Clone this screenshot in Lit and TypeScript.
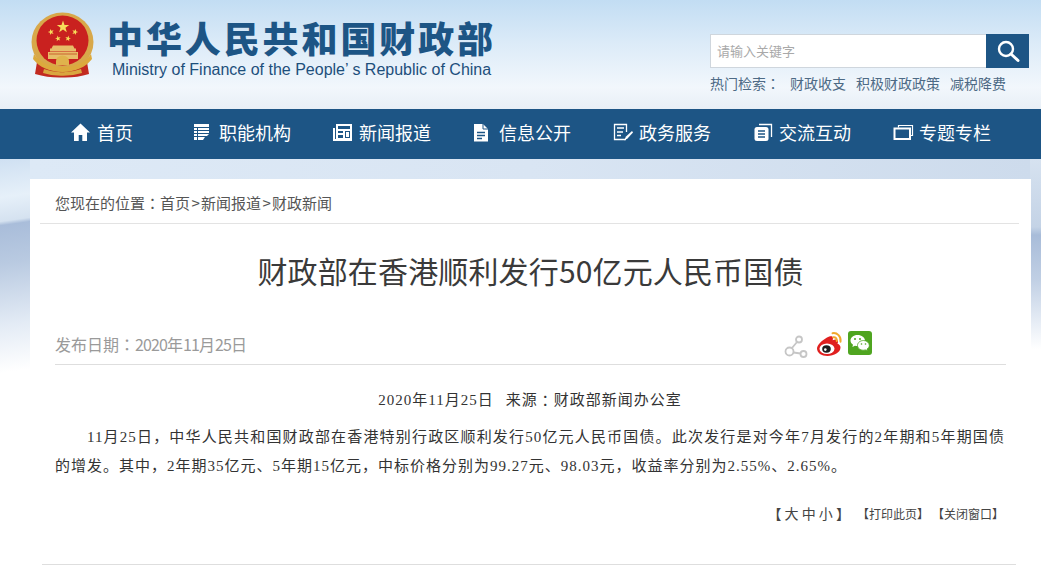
import { LitElement, html, css, svg } from "lit";
import { customElement } from "lit/decorators.js";

const NAVY = "#1d5585";

function star(cx: number, cy: number, r: number, rot = 0) {
  const pts: string[] = [];
  for (let i = 0; i < 10; i++) {
    const rad = i % 2 === 0 ? r : r * 0.4;
    const a = -Math.PI / 2 + (i * Math.PI) / 5 + rot;
    pts.push(`${(cx + rad * Math.cos(a)).toFixed(2)},${(cy + rad * Math.sin(a)).toFixed(2)}`);
  }
  return pts.join(" ");
}

const navIcons = [
  svg`<svg width="20" height="20" viewBox="0 0 20 20"><path d="M10 1.500 .5 10.500h3V19h4.700v-6h3.600v6h4.700v-8.500h3z" fill="#fff" transform="translate(-.5 0)"/></svg>`,
  svg`<svg width="17" height="18" viewBox="0 0 17 18"><path d="M1 1h15v3H1zM1 5h3v2H1zM5 5h11v2H5zM1 8h3v2H1zM5 8h11v2H5zM1 11h3v2H1zM5 11h11l-2 2H5zM1 14h3v3H1zM5 14h7l-2 3H5z" fill="#fff"/></svg>`,
  svg`<svg width="19" height="20" viewBox="0 0 19 20"><path d="M3 2h16v17H0V6h2v11h1z" fill="#fff"/><path d="M5 4h12v3H5zM5 9h5v2H5zM5 13h5v3H5zM12 9h5v7h-5z" fill="${NAVY}"/><path d="M13 10h3v5h-3z" fill="#fff"/></svg>`,
  svg`<svg width="16" height="19" viewBox="0 0 16 19"><path d="M1 1h9l5 5v12.500H1z" fill="#fff"/><path d="M10 1v5h5" fill="none" stroke="${NAVY}"/><path d="M4 9.500h8M4 12.500h8M4 15.500h5" stroke="${NAVY}" stroke-width="1.400"/></svg>`,
  svg`<svg width="21" height="20" viewBox="0 0 21 20"><path d="M13 17.500H1.500V2.500h12V10M4 6h7M4 10h6M4 13.500h4" fill="none" stroke="#fff" stroke-width="1.300"/><path d="M11 18.500l2-4 6-5.500 1 1.500-5.500 6z" fill="#fff"/></svg>`,
  svg`<svg width="20" height="20" viewBox="0 0 20 20"><path d="M6 2.500h12.500V15" fill="none" stroke="#fff" stroke-width="1.300"/><rect x="1.500" y="5" width="14" height="14" rx="2.500" fill="#fff"/><path d="M5 9h7M5 12h7M5 15h7" stroke="${NAVY}" stroke-width="1.500"/></svg>`,
  svg`<svg width="21" height="17" viewBox="0 0 21 17"><path d="M5.500 3.500V1.500h14v10H17" fill="none" stroke="#fff" stroke-width="1.200"/><rect x="1.500" y="4.500" width="15.500" height="10.500" fill="none" stroke="#fff" stroke-width="2"/></svg>`,
];
const navLabels = ["首页", "职能机构", "新闻报道", "信息公开", "政务服务", "交流互动", "专题专栏"];
const navWidths = [122, 140, 140, 140, 140, 140, 140];

const emblem = svg`<svg class="emblem" width="66" height="68" viewBox="0 0 66 68">
  <path d="M8 44 5 62q14 4 27 3.500Q46 66 59 62l-3-18z" fill="#c22a20"/>
  <ellipse cx="32.500" cy="30" rx="31" ry="29.500" fill="#d8a84a"/>
  <ellipse cx="32.500" cy="28.500" rx="26" ry="25" fill="#c9211f"/>
  <polygon points="${star(33, 15, 6.500)}" fill="#f7dc5a"/>
  <polygon points="${star(21, 20, 3.200, -0.3)}" fill="#f7dc5a"/>
  <polygon points="${star(45, 20, 3.200, 0.3)}" fill="#f7dc5a"/>
  <polygon points="${star(28, 26.500, 3, -0.2)}" fill="#f7dc5a"/>
  <polygon points="${star(38, 26.500, 3, 0.2)}" fill="#f7dc5a"/>
  <path d="M23 33.500h20l1.500 3h-23zM20 36.500h26v3H20zM18 40h30v7H18z" fill="#e7bd68"/>
  <path d="M19 41.500h28v1H19z" fill="#c9622f"/>
  <path d="M4 42c6 9 16 13 28.500 13S55 51 61 42l1 5c-6 8-17 13-29.500 13S9 55 3 47z" fill="#dcaa3d"/>
  <path d="M31 46h3v3h-3z" fill="#c9211f"/>
  <path d="M26 49a6.500 5.500 0 0 1 13 0v4H26z" fill="#e0b34c"/>
  <path d="M14 57q9 3.500 18 3.200 10 .3 19-3.200l1 4q-10 3-20 2.800Q22 64 13 61z" fill="#d9a63f"/>
</svg>`;

const weibo = svg`<svg width="27" height="27" viewBox="0 0 27 27">
  <path d="M11 6.500c3.500-2 6-1.800 6 .5 0 1-.3 1.700-.3 2.200 2.500-1 5-1 5.300 1.300.1 1-.4 1.800-.5 2.300 1.800.5 3 2 3 3.800C24.500 21.500 18 25 11.500 25 5.500 25 1 22 1 17.500 1 14 6 9.300 11 6.500z" fill="#e0201f"/>
  <ellipse cx="11" cy="17.700" rx="7.500" ry="5.300" fill="#fff"/>
  <ellipse cx="10.500" cy="18" rx="4.300" ry="3.700" fill="#1e1e1e"/>
  <circle cx="9.300" cy="18.600" r="1.300" fill="#fff"/>
  <path d="M16.500 2.200c4.600-.8 8.800 3 8 8.500M17.300 6.300c2.300-.4 4 1.300 3.400 3.700" fill="none" stroke="#f1a92e" stroke-width="2" stroke-linecap="round"/>
</svg>`;

const wechat = svg`<svg width="24" height="24" viewBox="0 0 24 24">
  <rect width="24" height="24" rx="3" fill="#4fa520"/>
  <path d="M9.500 4C5.400 4 2.500 6.600 2.500 9.500c0 1.800 1 3.200 2.500 4.200L4.400 16l2.500-1.300c1 .3 1.800.4 2.800.4C14 15 17 12.500 17 9.500 17 6.500 13.700 4 9.500 4z" fill="#fff"/>
  <path d="M15.500 9.500c-3.300 0-6 2.200-6 4.900 0 2.700 2.700 4.800 6 4.800.7 0 1.400-.1 2-.3l2 1.100-.5-1.900c1.400-.9 2.300-2.200 2.300-3.700 0-2.700-2.600-4.900-5.800-4.900z" fill="#fff" stroke="#4fa520" stroke-width=".8"/>
  <circle cx="7" cy="8" r="1" fill="#4fa520"/><circle cx="12" cy="8" r="1" fill="#4fa520"/><circle cx="13.500" cy="13" r=".8" fill="#4fa520"/><circle cx="17.500" cy="13" r=".8" fill="#4fa520"/>
</svg>`;

const share = svg`<svg width="24" height="24" viewBox="0 0 24 24" fill="none" stroke="#c6c6c6" stroke-width="1.800">
  <circle cx="5.500" cy="16.500" r="4"/><circle cx="15" cy="4.500" r="3"/><circle cx="19.500" cy="19" r="3"/><path d="M8 13l5-6M9.500 17.500l7 1"/>
</svg>`;

@customElement("app-root")
export class AppRoot extends LitElement {
  static styles = css`
    :host {
      display: block;
      width: 1041px;
      height: 570px;
      overflow: hidden;
      font-family: "Liberation Sans", "Noto Sans CJK SC", sans-serif;
      background: #fff;
    }
    .header {
      height: 109px;
      background: linear-gradient(180deg, #c2ddf3 0%, #dcebf8 40%, #f2f7fc 80%, #e8eff6 100%);
      display: flex;
      justify-content: space-between;
    }
    .brand { display: flex; padding: 12px 0 0 30px; gap: 12px; }
    .emblem { flex: none; }
    .brand-text { display: flex; flex-direction: column; padding-top: 3px; }
    .cn {
      font-family: "Noto Sans CJK SC", sans-serif;
      font-weight: 900;
      font-size: 36px;
      letter-spacing: 2.900px;
      line-height: 44px;
      color: #1d5585;
      white-space: nowrap;
      margin-left: -1px;
    }
    .en {
      font-size: 16px;
      line-height: 18px;
      color: #1d4f7c;
      margin: 2px 0 0 4px;
      white-space: nowrap;
    }
    .tools { width: 320px; margin-right: 11px; padding-top: 34px; }
    .search { display: flex; height: 34px; width: 320px; }
    .input {
      width: 276px;
      box-sizing: border-box;
      background: #fff;
      border: 1px solid #cfd6dd;
      border-right: 0;
      font-size: 13px;
      line-height: 32px;
      padding-left: 6px;
      color: #a9a9a9;
      font-family: "Noto Sans CJK SC", sans-serif;
    }
    .btn {
      width: 43px;
      background: #1d5585;
      display: flex;
      align-items: center;
      justify-content: center;
    }
    .hot {
      display: flex;
      font-family: "Noto Sans CJK SC", sans-serif;
      font-size: 14px;
      line-height: 20px;
      color: #4d6a85;
      margin-top: 5px;
      white-space: nowrap;
    }
    .hot .l { width: 80px; display: flex; }
    .hot .a { margin-right: 10px; }
    .tc { font-family: "Noto Sans CJK TC", sans-serif; }
    .nav { height: 50px; background: #1d5585; display: flex; padding-left: 71px; }
    .item {
      display: flex;
      align-items: center;
      color: #fff;
      font-family: "Noto Sans CJK SC", sans-serif;
      font-size: 18px;
      white-space: nowrap;
      height: 50px;
      padding-bottom: 4px;
      box-sizing: border-box;
    }
    .slot { flex: none; width: 26px; display: flex; align-items: center; }
    .stage {
      height: 411px;
      padding: 20px 10px 0 30px;
      box-sizing: border-box;
      background-repeat: no-repeat;
      background-color: #fff;
      background-image:
        linear-gradient(90deg, #dde9f6 0%, #d9e5f3 50%, #cddbec 100%),
        linear-gradient(172deg, #cfe0f2 0, #e6f0f9 38px, #d5e2f0 62px, #a9bdda 66px, #b9cae1 104px, #e3ebf5 165px, #ffffff 212px),
        linear-gradient(180deg, #d6e2f0 0, #c4d3e6 68px, #a8bcd9 76px, #c0cfe4 120px, #e8eef6 165px, #ffffff 190px);
      background-size: 1000px 20px, 30px 240px, 11px 240px;
      background-position: 30px 0, 0 0, 1030px 0;
    }
    .card {
      width: 1001px;
      height: 391px;
      background: #fff;
      padding: 0 25px;
      box-sizing: border-box;
    }
    .crumb {
      display: flex;
      height: 45px;
      margin-left: -15px;
      padding-left: 15px;
      width: 979px;
      box-sizing: border-box;
      font-family: "Noto Sans CJK SC", sans-serif;
      font-size: 15px;
      line-height: 48px;
      color: #555;
      border-bottom: 1px solid #e3e3e3;
      white-space: nowrap;
    }
    .gt { width: 11px; text-align: center; }
    h1 {
      margin: 24px 0 0 0;
      height: 44px;
      text-align: center;
      font-family: "Noto Sans CJK SC", sans-serif;
      font-weight: 400;
      font-size: 30px;
      line-height: 44px;
      letter-spacing: 0.150px;
      color: #3a3a3a;
      white-space: nowrap;
    }
    .meta {
      margin-top: 36px;
      height: 36px;
      width: 951px;
      border-bottom: 1px solid #dedede;
      display: flex;
      justify-content: space-between;
      align-items: flex-start;
    }
    .date {
      display: flex;
      font-family: "Noto Sans CJK SC", sans-serif;
      font-size: 16px;
      line-height: 24px;
      color: #9a9a9a;
      padding-top: 4px;
    }
    .d { letter-spacing: -0.880px; }
    .icons { display: flex; align-items: flex-start; margin-right: 134px; gap: 5px; margin-top: 3px; }
    .icons svg:first-child { margin-top: 4px; margin-right: 3px; }
    .body {
      font-family: "Liberation Serif", "Noto Sans CJK SC", serif;
      color: #333;
      font-size: 15px;
      letter-spacing: 1px;
    }
    .src {
      display: flex;
      justify-content: center;
      gap: 12px;
      line-height: 24px;
      margin-top: 23px;
      width: 950px;
    }
    .from { display: flex; }
    .p { margin: 11px 0 0; width: 950px; line-height: 29px; text-indent: 32px; text-align: justify; }
    .ops {
      width: 949px;
      display: flex;
      justify-content: flex-end;
      align-items: center;
      height: 24px;
      margin-top: 20px;
      font-family: "Noto Sans CJK SC", sans-serif;
      font-size: 12px;
      color: #444;
      white-space: pre;
    }
    .sizes { font-size: 14px; margin-right: 7px; }
    .op + .op { margin-left: 3px; }
    .end { width: 974px; margin-top: 39px; border-top: 1px solid #dedede; margin-left: -13px; }
  `;

  render() {
    return html`
      <div class="header">
        <div class="brand">
          ${emblem}
          <div class="brand-text">
            <div class="cn">中华人民共和国财政部</div>
            <div class="en">Ministry of Finance of the People’ s Republic of China</div>
          </div>
        </div>
        <div class="tools">
          <div class="search">
            <div class="input">请输入关键字</div>
            <div class="btn">
              <svg width="26" height="26" viewBox="0 0 26 26" fill="none" stroke="#fff">
                <circle cx="11" cy="11" r="7" stroke-width="2.400"/>
                <path d="M16 16l7 6.500" stroke-width="3" stroke-linecap="round"/>
              </svg>
            </div>
          </div>
          <div class="hot">
            <span class="l"><span>热门检索</span><span class="tc">：</span></span>
            <span class="a">财政收支</span>
            <span class="a">积极财政政策</span>
            <span class="a">减税降费</span>
          </div>
        </div>
      </div>
      <div class="nav">
        ${navLabels.map(
          (t, i) => html`<div class="item" style="width:${navWidths[i]}px"><span class="slot">${navIcons[i]}</span><span>${t}</span></div>`
        )}
      </div>
      <div class="stage">
        <div class="card">
          <div class="crumb"><span>您现在的位置</span><span class="tc">：</span><span>首页</span><span class="gt">&gt;</span><span>新闻报道</span><span class="gt">&gt;</span><span>财政新闻</span></div>
          <h1>财政部在香港顺利发行50亿元人民币国债</h1>
          <div class="meta">
            <div class="date"><span>发布日期</span><span class="tc">：</span><span class="d">2020</span><span>年</span><span class="d">11</span><span>月</span><span class="d">25</span><span>日</span></div>
            <div class="icons">${share}${weibo}${wechat}</div>
          </div>
          <div class="body">
            <div class="src"><span>2020年11月25日</span><span class="from"><span>来源</span><span class="tc">：</span><span>财政部新闻办公室</span></span></div>
            <p class="p">11月25日，中华人民共和国财政部在香港特别行政区顺利发行50亿元人民币国债。此次发行是对今年7月发行的2年期和5年期国债的增发。其中，2年期35亿元、5年期15亿元，中标价格分别为99.27元、98.03元，收益率分别为2.55%、2.65%。</p>
          </div>
          <div class="ops">
            <span class="sizes">【 大 中 小 】</span><span class="op">【打印此页】</span><span class="op">【关闭窗口】</span>
          </div>
          <div class="end"></div>
        </div>
      </div>
    `;
  }
}
